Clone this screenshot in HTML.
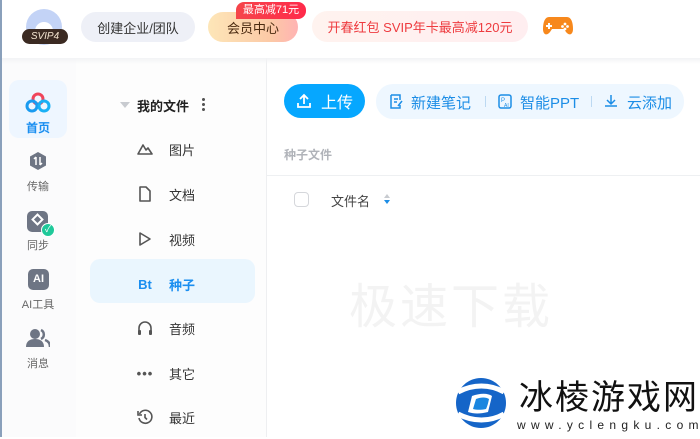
<!DOCTYPE html>
<html><head><meta charset="utf-8"><style>
*{margin:0;padding:0;box-sizing:border-box}
body{width:700px;height:437px;overflow:hidden;background:#fff;font-family:"Liberation Sans","Noto Sans CJK SC",sans-serif;position:relative;color:#333}
.a{position:absolute}
.pill{position:absolute;border-radius:16px;font-size:13px;display:flex;align-items:center;justify-content:center}
.nav{position:absolute;left:0;width:76px;text-align:center;font-size:11px;color:#666}
.it{position:absolute;left:90px;width:165px;height:44px;display:flex;align-items:center;font-size:13px;color:#333}
.it .ic{width:20px;margin-left:45px;margin-right:14px;display:flex;justify-content:center}
</style></head><body>
<div class="a" style="left:0;top:0;width:2px;height:437px;background:#8aa0bb"></div>
<div class="a" style="left:2px;top:58px;width:74px;height:379px;background:#fbfbfc"></div>
<div class="a" style="left:76px;top:58px;width:190px;height:379px;background:#fdfdfd"></div>
<div class="a" style="left:266px;top:58px;width:1px;height:379px;background:#eeeff1"></div>
<div class="a" style="left:2px;top:58px;width:698px;height:6px;background:linear-gradient(#f2f3f5,#fff0)"></div>

<div class="a" style="left:26px;top:9px;width:36px;height:36px;border-radius:50%;background:#c3d3f6"></div>
<div class="a" style="left:35px;top:22px;width:18px;height:14px;border-radius:9px 9px 0 0;background:#fff"></div>
<div class="a" style="left:22px;top:29px;width:46px;height:15px;border-radius:8px;background:#3b2a22;color:#f3e3cf;font-size:10px;text-align:center;line-height:15px;font-style:italic">SVIP4</div>

<div class="pill" style="left:81px;top:12px;width:114px;height:30px;background:#eef0f7;color:#333">创建企业/团队</div>
<div class="pill" style="left:208px;top:12px;width:90px;height:30px;background:linear-gradient(90deg,#fde6b8,#fcc9a6 70%,#ffb3b3);color:#4a2a10">会员中心</div>
<div class="a" style="left:236px;top:2px;width:70px;height:17px;border-radius:8px 8px 8px 0;background:linear-gradient(90deg,#f5454a,#ff2a4a);color:#fff;font-size:11px;text-align:center;line-height:17px">最高减71元</div>
<div class="pill" style="left:312px;top:11px;width:216px;height:31px;background:linear-gradient(90deg,#fff3ef,#ffeef0);color:#ee3b3f">开春红包 SVIP年卡最高减120元</div>
<svg class="a" style="left:542px;top:14px" width="32" height="24" viewBox="0 0 32 24"><path d="M7 3h18c4 0 6 5 6 12 0 6-4 7-7 3l-2-3H10l-2 3c-3 4-7 3-7-3C1 8 3 3 7 3z" fill="#f7881c"/><path d="M7 9v6M4 12h6" stroke="#fff" stroke-width="2"/><circle cx="23" cy="10" r="1.4" fill="#fff"/><circle cx="23" cy="15" r="1.4" fill="#fff"/><circle cx="20.5" cy="12.5" r="1.4" fill="#fff"/><circle cx="25.5" cy="12.5" r="1.4" fill="#fff"/></svg>

<div class="a" style="left:9px;top:80px;width:58px;height:58px;border-radius:10px;background:#eef6ff"></div>
<svg class="a" style="left:25px;top:92px" width="26" height="22" viewBox="0 0 26 22"><circle cx="13" cy="7" r="5" fill="none" stroke="#f0445a" stroke-width="3"/><circle cx="7" cy="14" r="5" fill="none" stroke="#1a9bf0" stroke-width="3"/><circle cx="19" cy="14" r="5" fill="none" stroke="#1ab0f5" stroke-width="3"/></svg>
<div class="nav" style="top:119px;color:#1a8ef0;font-weight:bold;font-size:12px">首页</div>
<svg class="a" style="left:28px;top:151px" width="20" height="20" viewBox="0 0 20 20"><path d="M10 1l8 4.5v9L10 19l-8-4.5v-9z" fill="#6e7584"/><path d="M8 6v8M12 6v8M6 8l2-2M14 12l-2 2" stroke="#fff" stroke-width="1.5"/></svg>
<div class="nav" style="top:178px">传输</div>
<div class="a" style="left:27px;top:211px;width:21px;height:21px;border-radius:5px;background:#6e7584"></div>
<div class="a" style="left:33px;top:215px;width:9px;height:9px;border:2px solid #fff;transform:rotate(45deg)"></div>
<div class="a" style="left:41px;top:223px;width:14px;height:14px;border-radius:50%;background:#1fc99a;border:1.5px solid #fff;color:#fff;font-size:9px;line-height:11px;text-align:center">✓</div>
<div class="nav" style="top:237px">同步</div>
<div class="a" style="left:28px;top:269px;width:21px;height:21px;border-radius:5px;background:#6e7584;color:#fff;font-size:11px;font-weight:bold;line-height:21px;text-align:center">AI</div>
<div class="nav" style="top:296px">AI工具</div>
<svg class="a" style="left:26px;top:328px" width="24" height="20" viewBox="0 0 24 20"><circle cx="9" cy="6" r="5" fill="#6e7584"/><path d="M0 19c0-6 4-8 9-8s9 2 9 8z" fill="#6e7584"/><path d="M15 2a5 5 0 010 9M19 12c3 1 5 3 5 7" stroke="#6e7584" stroke-width="2.5" fill="none"/></svg>
<div class="nav" style="top:355px">消息</div>

<div class="a" style="left:120px;top:102px;width:0;height:0;border-left:5px solid transparent;border-right:5px solid transparent;border-top:6px solid #c8cbd0"></div>
<div class="a" style="left:137px;top:96px;font-size:13px;font-weight:bold;color:#222">我的文件</div>
<div class="a" style="left:202px;top:97px;width:3px;height:14px;background:radial-gradient(circle,#555 1.4px,transparent 1.6px) 0 0/3px 5px"></div>
<div class="a" style="left:90px;top:259px;width:165px;height:44px;border-radius:10px;background:#eaf6fe"></div>
<div class="it" style="top:127px"><span class="ic"><svg width="16" height="14" viewBox="0 0 16 14"><path d="M1 12l5-9 3 5 2-2 4 6z" fill="none" stroke="#555" stroke-width="1.6" stroke-linejoin="round"/></svg></span>图片</div>
<div class="it" style="top:172px"><span class="ic"><svg width="14" height="16" viewBox="0 0 14 16"><path d="M2 1h6l4 4v10H2z" fill="none" stroke="#555" stroke-width="1.6" stroke-linejoin="round"/></svg></span>文档</div>
<div class="it" style="top:217px"><span class="ic"><svg width="14" height="16" viewBox="0 0 14 16"><path d="M2 2l10 6-10 6z" fill="none" stroke="#555" stroke-width="1.6" stroke-linejoin="round"/></svg></span>视频</div>
<div class="it" style="top:262px;color:#1a8ef0;font-weight:bold"><span class="ic" style="font-size:13px">Bt</span>种子</div>
<div class="it" style="top:306px"><span class="ic"><svg width="16" height="16" viewBox="0 0 16 16"><path d="M2 12V8a6 6 0 0112 0v4" fill="none" stroke="#555" stroke-width="1.6"/><rect x="1" y="10" width="3" height="5" rx="1" fill="#555"/><rect x="12" y="10" width="3" height="5" rx="1" fill="#555"/></svg></span>音频</div>
<div class="it" style="top:351px"><span class="ic" style="font-weight:bold;letter-spacing:1px;color:#555">•••</span>其它</div>
<div class="it" style="top:395px"><span class="ic"><svg width="16" height="16" viewBox="0 0 16 16"><path d="M2.5 5A6.5 6.5 0 112 9" fill="none" stroke="#555" stroke-width="1.6"/><path d="M1 2v4h4" fill="none" stroke="#555" stroke-width="1.6"/><path d="M8 5v3.5l2 2" stroke="#555" stroke-width="1.6" fill="none"/></svg></span>最近</div>

<div class="pill" style="left:284px;top:84px;width:81px;height:34px;border-radius:17px;background:#06a7ff;color:#fff;font-size:16px"><svg width="16" height="16" viewBox="0 0 16 16" style="margin-right:9px"><path d="M8 11V2M4 6l4-4 4 4M2 10v4h12v-4" fill="none" stroke="#fff" stroke-width="1.8"/></svg>上传</div>
<div class="a" style="left:376px;top:84px;width:308px;height:35px;border-radius:17px;background:#eef7ff"></div>
<svg class="a" style="left:389px;top:94px" width="14" height="15" viewBox="0 0 14 15"><path d="M2 1h9v5M11 11v3H2V1" fill="none" stroke="#1c8de6" stroke-width="1.5"/><path d="M5 5h4M5 8h3M9 12l4-5" stroke="#1c8de6" stroke-width="1.5"/></svg>
<div class="a" style="left:411px;top:92px;font-size:15px;color:#1c8de6">新建笔记</div>
<div class="a" style="left:485px;top:96px;width:1px;height:11px;background:#bcd9f2"></div>
<svg class="a" style="left:498px;top:94px" width="14" height="15" viewBox="0 0 14 15"><rect x="1" y="1" width="12" height="13" rx="2" fill="none" stroke="#1c8de6" stroke-width="1.5"/><text x="3" y="8" font-size="6" fill="#1c8de6" font-family="Liberation Sans">P</text><text x="6" y="13" font-size="5" fill="#1c8de6" font-family="Liberation Sans">AI</text></svg>
<div class="a" style="left:520px;top:92px;font-size:15px;color:#1c8de6">智能PPT</div>
<div class="a" style="left:591px;top:96px;width:1px;height:11px;background:#bcd9f2"></div>
<svg class="a" style="left:604px;top:94px" width="14" height="14" viewBox="0 0 14 14"><path d="M7 1v8M3 6l4 4 4-4M1 12h12" fill="none" stroke="#1c8de6" stroke-width="1.5"/></svg>
<div class="a" style="left:627px;top:92px;font-size:15px;color:#1c8de6">云添加</div>

<div class="a" style="left:284px;top:146px;font-size:12px;font-weight:bold;color:#b0b3b9">种子文件</div>
<div class="a" style="left:267px;top:175px;width:433px;height:1px;background:#eef0f2"></div>
<div class="a" style="left:294px;top:192px;width:15px;height:15px;border:1px solid #d5d7db;border-radius:4px"></div>
<div class="a" style="left:331px;top:191px;font-size:13px;color:#444">文件名</div>
<div class="a" style="left:384px;top:194px;border-left:3px solid transparent;border-right:3px solid transparent;border-bottom:4px solid #c8cbd0"></div>
<div class="a" style="left:384px;top:200px;border-left:3px solid transparent;border-right:3px solid transparent;border-top:4px solid #1c8de6"></div>

<div class="a" style="left:349px;top:267px;font-size:48px;color:#f3f3f3;letter-spacing:3px">极速下载</div>

<svg class="a" style="left:452px;top:374px" width="58" height="58" viewBox="0 0 58 58"><circle cx="29" cy="29" r="25" fill="#1565c8"/><path d="M6 18c15-8 32-8 46 0M6 40c15 8 32 8 46 0" stroke="#fff" stroke-width="5" fill="none"/><path d="M20 22c8-3 16-3 20 0-2 8-3 12-4 16-8 2-14 2-20 0z" fill="#fff"/><path d="M24 25c5-2 10-2 13 0-1 5-2 8-3 10-5 1-9 1-13 0z" fill="#1a86e0"/></svg>
<div class="a" style="left:519px;top:375px;font-size:34px;color:#111;letter-spacing:2px;font-family:'Noto Sans CJK SC',sans-serif;line-height:40px">冰棱游戏网</div>
<div class="a" style="left:517px;top:418px;font-size:12px;color:#222;letter-spacing:5.3px">www.yclengku.com</div>
</body></html>
